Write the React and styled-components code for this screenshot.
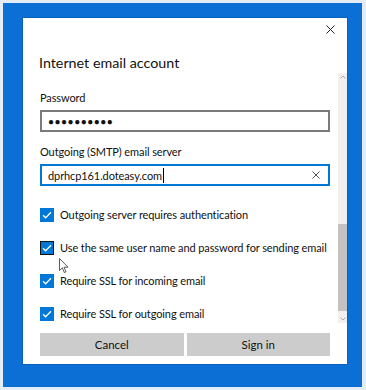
import React from "react";
import styled, { createGlobalStyle } from "styled-components";

const GlobalStyle = createGlobalStyle`
  html, body {
    margin: 0;
    padding: 0;
    background: #e4ecf5;
  }
  * {
    box-sizing: border-box;
  }
`;

const Frame = styled.div`
  width: 366px;
  height: 390px;
  padding: 3px 4px 3px 3px;
  background: #e4ecf5;
  font-family: Lato, "Noto Sans", sans-serif;
`;

const Desktop = styled.div`
  height: 100%;
  background: #0b6fd6;
  padding: 15px 15px 23px 20px;
`;

const Dialog = styled.div`
  position: relative;
  height: 100%;
  background: #ffffff;
  box-shadow: 0 0 0 1px rgba(0, 0, 0, 0.12);
  display: flex;
  flex-direction: column;
  padding: 0 0 8px 17px;
`;

const CloseRow = styled.div`
  height: 22px;
  display: flex;
  justify-content: flex-end;
  padding-right: 6px;
`;

const CloseButton = styled.button`
  width: 22px;
  height: 22px;
  border: none;
  background: transparent;
  padding: 0;
  display: flex;
  align-items: center;
  justify-content: center;
`;

const Title = styled.h1`
  margin: 13px 0 0 -1px;
  font-size: 14.3px;
  line-height: 20px;
  font-weight: 400;
  color: #111;
`;

const Body = styled.div`
  height: 250px;
  display: flex;
`;

const Scroller = styled.div`
  flex: 1;
  overflow: hidden;
  padding: 17px 8px 0 0;
`;

const Label = styled.div`
  font-size: 11px;
  letter-spacing: -0.1px;
  line-height: 16px;
  color: #111;
  white-space: nowrap;
  margin-top: ${(p) => p.$top || 0}px;
`;

const Field = styled.div`
  margin-top: 4px;
  height: 22px;
  border: 2px solid ${(p) => (p.$focused ? "#0078d7" : "#7a7a7a")};
  display: flex;
  align-items: center;
  padding: 0 6px;
  font-size: 11px;
  letter-spacing: -0.1px;
  color: #111;
`;

const Dots = styled.span`
  font-family: "Noto Sans", sans-serif;
  font-size: 10px;
  letter-spacing: 0.5px;
  line-height: 1;
`;

const Caret = styled.span`
  display: inline-block;
  width: 1px;
  height: 15px;
  background: #000;
  margin-left: 1px;
`;

const ClearIcon = styled.span`
  margin-left: auto;
  display: flex;
  align-items: center;
  margin-right: 2px;
`;

const CheckList = styled.div`
  margin-top: 12px;
`;

const CheckRow = styled.label`
  height: 33px;
  display: flex;
  align-items: center;
  gap: 6px;
  font-size: 11px;
  letter-spacing: -0.1px;
  white-space: nowrap;
  color: #111;
`;

const Box = styled.span`
  width: 14px;
  height: 14px;
  background: #0078d7;
  border: ${(p) => (p.$focused ? "1.5px solid #111" : "none")};
  display: flex;
  align-items: center;
  justify-content: center;
  flex-shrink: 0;
`;

const Scrollbar = styled.div`
  width: 9px;
  background: #f0f0f0;
  display: flex;
  flex-direction: column;
  align-items: center;
  justify-content: space-between;
  padding: 2px 0;
`;

const Track = styled.div`
  flex: 1;
  width: 100%;
  padding: 145px 0 6px;
  display: flex;
`;

const Thumb = styled.div`
  flex: 1;
  background: #c2c2c2;
`;

const Footer = styled.div`
  margin-top: 10px;
  padding-right: 17px;
  display: grid;
  grid-template-columns: 1fr 1fr;
  gap: 3px;
`;

const Button = styled.button`
  height: 23px;
  border: none;
  background: #cccccc;
  font-family: inherit;
  font-size: 11.5px;
  color: #111;
  padding: 0;
`;

const Pointer = styled.svg`
  position: absolute;
  left: 36px;
  top: 240px;
`;

const Check = () => (
  <svg width="10" height="8" viewBox="0 0 10 8">
    <path d="M1 4.2 L3.6 6.8 L9 1.2" fill="none" stroke="#fff" strokeWidth="1.3" />
  </svg>
);

const options = [
  "Outgoing server requires authentication",
  "Use the same user name and password for sending email",
  "Require SSL for incoming email",
  "Require SSL for outgoing email",
];

const App = () => {
  return (
    <Frame>
      <GlobalStyle />
      <Desktop>
        <Dialog>
          <CloseRow>
            <CloseButton aria-label="Close">
              <svg width="9" height="9" viewBox="0 0 9 9">
                <path d="M0.5 0.5 L8.5 8.5 M8.5 0.5 L0.5 8.5" stroke="#222" strokeWidth="1" />
              </svg>
            </CloseButton>
          </CloseRow>
          <Title>Internet email account</Title>
          <Body>
            <Scroller>
              <Label>Password</Label>
              <Field>
                <Dots>●●●●●●●●●●</Dots>
              </Field>
              <Label $top={12}>Outgoing (SMTP) email server</Label>
              <Field $focused>
                dprhcp161.doteasy.com
                <Caret />
                <ClearIcon>
                  <svg width="8" height="8" viewBox="0 0 8 8">
                    <path d="M0.5 0.5 L7.5 7.5 M7.5 0.5 L0.5 7.5" stroke="#555" strokeWidth="1" />
                  </svg>
                </ClearIcon>
              </Field>
              <CheckList>
                {options.map((text, i) => (
                  <CheckRow key={text}>
                    <Box $focused={i === 1}>
                      <Check />
                    </Box>
                    {text}
                  </CheckRow>
                ))}
              </CheckList>
            </Scroller>
            <Scrollbar>
              <svg width="6" height="4" viewBox="0 0 6 4">
                <path d="M0.5 3.5 L3 1 L5.5 3.5" fill="none" stroke="#999" strokeWidth="0.8" />
              </svg>
              <Track>
                <Thumb />
              </Track>
              <svg width="6" height="4" viewBox="0 0 6 4">
                <path d="M0.5 0.5 L3 3 L5.5 0.5" fill="none" stroke="#999" strokeWidth="0.8" />
              </svg>
            </Scrollbar>
          </Body>
          <Footer>
            <Button>Cancel</Button>
            <Button>Sign in</Button>
          </Footer>
          <Pointer width="11" height="16" viewBox="0 0 11 16">
            <path
              d="M0.5 0.5 L0.5 12.5 L3.3 9.8 L5.3 14.5 L7 13.8 L5 9.2 L9 9.2 Z"
              fill="#fff"
              stroke="#333"
              strokeWidth="0.8"
            />
          </Pointer>
        </Dialog>
      </Desktop>
    </Frame>
  );
};

export default App;
